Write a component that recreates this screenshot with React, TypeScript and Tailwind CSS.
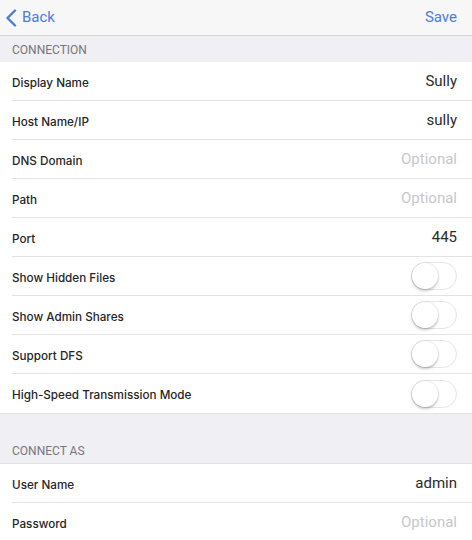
import React from "react";

type Row =
  | { label: string; kind: "value"; value: string }
  | { label: string; kind: "placeholder"; value: string }
  | { label: string; kind: "toggle" };

const connection: Row[] = [
  { label: "Display Name", kind: "value", value: "Sully" },
  { label: "Host Name/IP", kind: "value", value: "sully" },
  { label: "DNS Domain", kind: "placeholder", value: "Optional" },
  { label: "Path", kind: "placeholder", value: "Optional" },
  { label: "Port", kind: "value", value: "445" },
  { label: "Show Hidden Files", kind: "toggle" },
  { label: "Show Admin Shares", kind: "toggle" },
  { label: "Support DFS", kind: "toggle" },
  { label: "High-Speed Transmission Mode", kind: "toggle" },
];

const connectAs: Row[] = [
  { label: "User Name", kind: "value", value: "admin" },
  { label: "Password", kind: "placeholder", value: "Optional" },
];

function Toggle() {
  return (
    <div className="w-[46px] h-[28px] rounded-full border border-[#e5e5ea] bg-white relative">
      <div className="absolute left-0 top-0 w-[26px] h-[26px] rounded-full bg-white shadow-[0_2px_3px_rgba(0,0,0,0.22),0_0_0_1px_rgba(0,0,0,0.05)]" />
    </div>
  );
}

function Group({ rows }: { rows: Row[] }) {
  return (
    <div className="bg-white">
      {rows.map((r, i) => (
        <div key={r.label} className="pl-3">
          <div
            className={
              "h-[39px] flex items-center justify-between pr-[15px] " +
              (i < rows.length - 1 ? "border-b border-[#e3e3e6]" : "")
            }
          >
            <span className="pt-[5px] text-[11.7px] font-medium text-[#252527] font-['Inter',sans-serif]">
              {r.label}
            </span>
            {r.kind === "toggle" ? (
              <Toggle />
            ) : (
              <span
                className={
                  "text-[15px] " +
                  (r.kind === "placeholder" ? "text-[#c7c7cd]" : "text-[#2b2b2b]")
                }
              >
                {r.value}
              </span>
            )}
          </div>
        </div>
      ))}
    </div>
  );
}

export default function App() {
  return (
    <div className="w-[472px] h-[540px] overflow-hidden bg-[#efeff4] font-['Roboto','Liberation_Sans',sans-serif]">
      <div className="h-[36px] bg-[#f7f7f7] border-b border-[#d6d6da] flex items-center justify-between pl-[5px] pr-[15px]">
        <div className="flex items-center gap-[5px] text-[#4a7ddc]">
          <svg width="12" height="18" viewBox="0 0 12 18" fill="none">
            <path d="M10 1.5 L2.5 9 L10 16.5" stroke="#4a7ddc" strokeWidth="2.4" strokeLinecap="round" strokeLinejoin="round" />
          </svg>
          <span className="text-[15px]">Back</span>
        </div>
        <span className="text-[15px] text-[#4a7ddc]">Save</span>
      </div>
      <div className="h-[26px] flex items-center pl-3 pt-[2px]">
        <span className="text-[12px] text-[#76767b]">CONNECTION</span>
      </div>
      <Group rows={connection} />
      <div className="h-[51px] flex items-end pl-3 pb-[3px] border-t border-b border-[#e3e3e6]">
        <span className="text-[12px] text-[#76767b]">CONNECT AS</span>
      </div>
      <Group rows={connectAs} />
    </div>
  );
}
